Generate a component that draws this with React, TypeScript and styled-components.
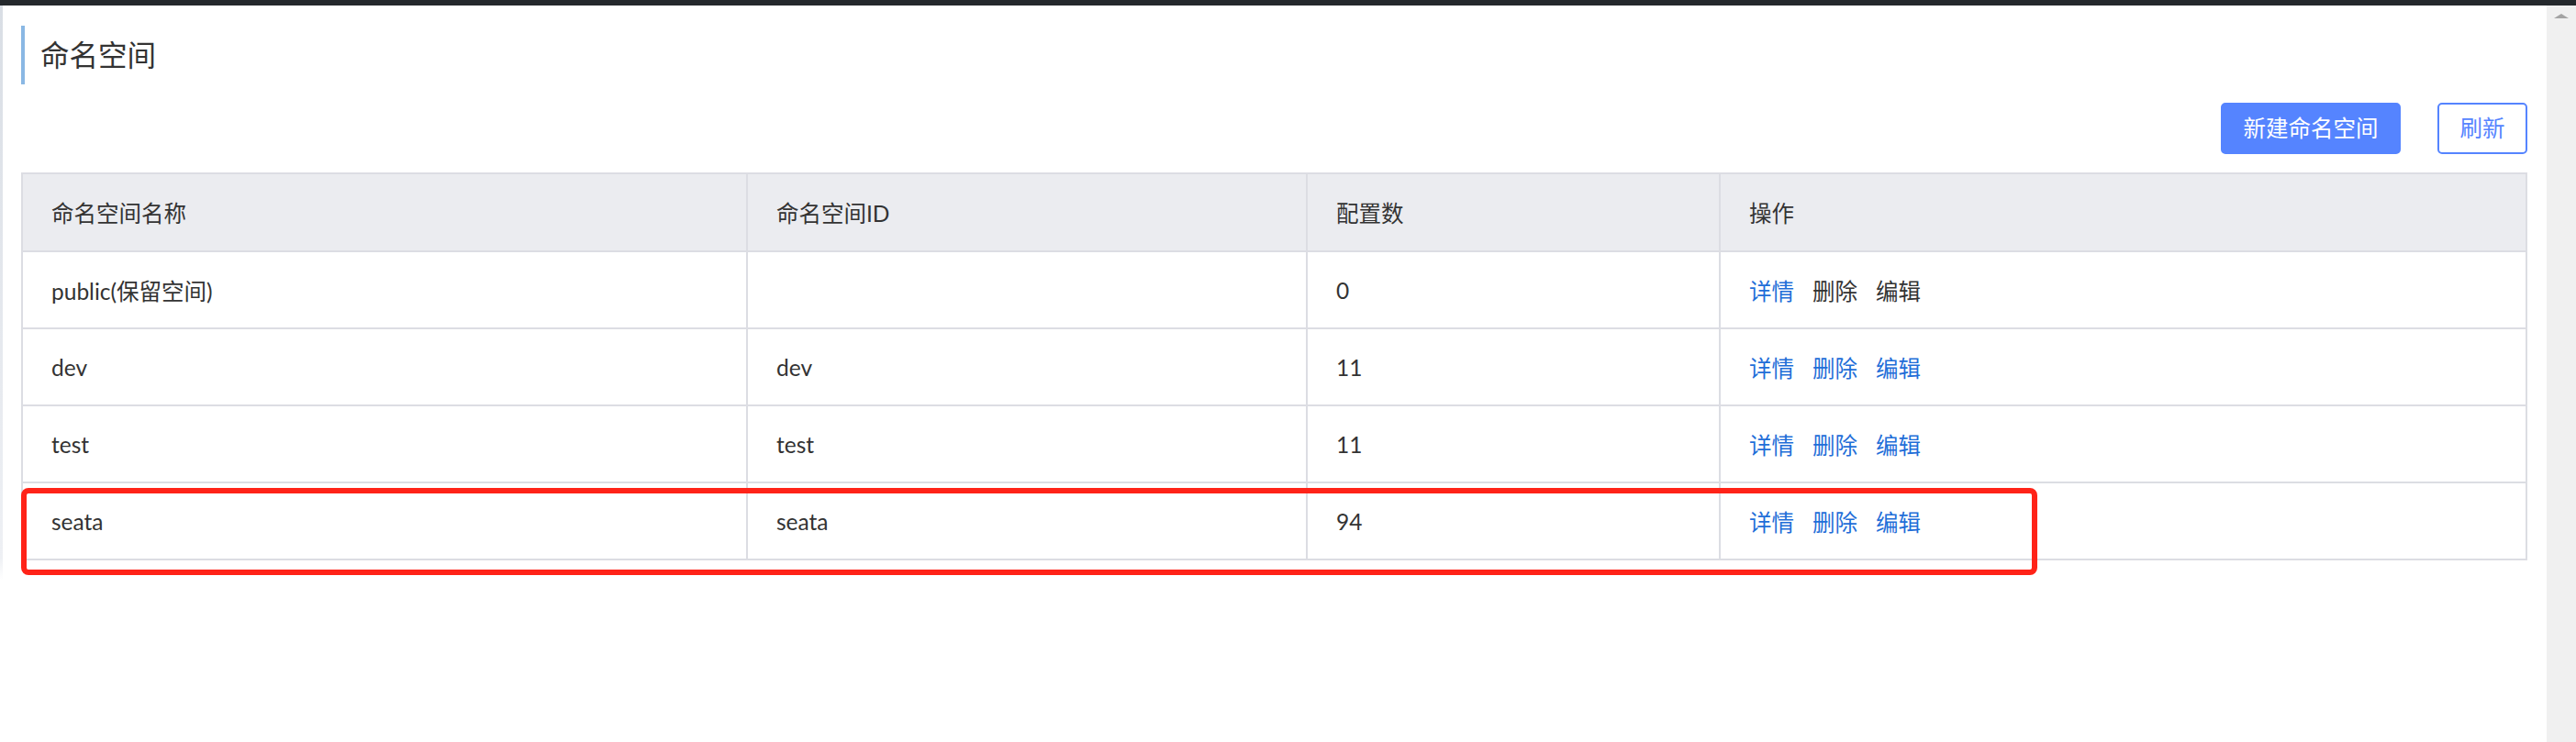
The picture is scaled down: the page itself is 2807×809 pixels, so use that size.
import React from "react";
import styled, { createGlobalStyle } from "styled-components";

const GlobalStyle = createGlobalStyle`
  html, body {
    margin: 0;
    padding: 0;
    background: #ffffff;
  }
  body {
    font-family: Lato, "Noto Sans CJK SC", sans-serif;
    color: #333333;
  }
  * { box-sizing: border-box; }
`;

const Page = styled.div`
  width: 2807px;
  height: 809px;
  display: flex;
  flex-direction: column;
  overflow: hidden;
`;

const TopBar = styled.div`
  height: 6px;
  flex: none;
  background: #24282c;
`;

const Body = styled.div`
  flex: 1;
  display: flex;
`;

const LeftStrip = styled.div`
  width: 3px;
  flex: none;
  background: linear-gradient(#d9dee5, #eef0f4 75%, #ffffff 78%);
`;

const Content = styled.main`
  flex: 1;
  padding: 22px 21px 0 20px;
  display: flex;
  flex-direction: column;
`;

const Scrollbar = styled.div`
  width: 32px;
  flex: none;
  background: #f0f0f0;
  display: flex;
  justify-content: center;
  padding-top: 9px;
`;

const ScrollArrow = styled.div`
  width: 0;
  height: 0;
  border-left: 8px solid transparent;
  border-right: 8px solid transparent;
  border-bottom: 5px solid #a3a3a3;
`;

const Title = styled.h1`
  margin: 0;
  height: 64px;
  border-left: 4px solid #8ab8e4;
  padding-left: 17px;
  font-size: 31.5px;
  font-weight: 400;
  line-height: 64px;
  color: #333333;
  font-family: Lato, "Noto Sans CJK SC", sans-serif;
`;

const Toolbar = styled.div`
  margin-top: 20px;
  display: flex;
  justify-content: flex-end;
  gap: 40px;
`;

const Button = styled.button<{ $primary?: boolean }>`
  height: 56px;
  padding: 0 22.5px;
  border: 2px solid #5584ff;
  border-radius: 5px;
  background: ${(p) => (p.$primary ? "#5584ff" : "#ffffff")};
  color: ${(p) => (p.$primary ? "#ffffff" : "#5584ff")};
  font-family: Lato, "Noto Sans CJK SC", sans-serif;
  font-size: 24.5px;
  line-height: 52px;
  cursor: pointer;
`;

const TableWrap = styled.div`
  position: relative;
  margin-top: 20px;
`;

const Table = styled.table`
  width: 100%;
  border-collapse: separate;
  border-spacing: 0;
  table-layout: fixed;
  border-top: 2px solid #dcdde3;
  border-left: 2px solid #dcdde3;
`;

const HeadCell = styled.th`
  height: 85px;
  padding: 0 0 0 31px;
  background: #ebecf0;
  border-right: 2px solid #dcdde3;
  border-bottom: 2px solid #dcdde3;
  text-align: left;
  font-weight: 400;
  font-size: 24.5px;
  color: #333333;
`;

const Cell = styled.td`
  height: 84px;
  padding: 0 0 0 31px;
  border-right: 2px solid #dcdde3;
  border-bottom: 2px solid #dcdde3;
  font-size: 24.5px;
  color: #333333;
  vertical-align: middle;
`;

const Actions = styled.div`
  display: flex;
  gap: 20px;
`;

const ActionLink = styled.a<{ $disabled?: boolean }>`
  color: ${(p) => (p.$disabled ? "#333333" : "#1f6ed8")};
  text-decoration: none;
  cursor: pointer;
`;

const Highlight = styled.div`
  position: absolute;
  left: 0;
  top: 344px;
  width: 2197px;
  height: 95px;
  border: 6px solid #ff2318;
  border-radius: 8px;
  pointer-events: none;
`;

type Row = { name: string; id: string; count: string; reserved?: boolean };

const rows: Row[] = [
  { name: "public(保留空间)", id: "", count: "0", reserved: true },
  { name: "dev", id: "dev", count: "11" },
  { name: "test", id: "test", count: "11" },
  { name: "seata", id: "seata", count: "94" },
];

export default function App() {
  return (
    <Page>
      <GlobalStyle />
      <TopBar />
      <Body>
        <LeftStrip />
        <Content>
          <Title>命名空间</Title>
          <Toolbar>
            <Button $primary>新建命名空间</Button>
            <Button>刷新</Button>
          </Toolbar>
          <TableWrap>
            <Table>
              <colgroup>
                <col style={{ width: 790 }} />
                <col style={{ width: 610 }} />
                <col style={{ width: 450 }} />
                <col />
              </colgroup>
              <thead>
                <tr>
                  <HeadCell>命名空间名称</HeadCell>
                  <HeadCell>命名空间ID</HeadCell>
                  <HeadCell>配置数</HeadCell>
                  <HeadCell>操作</HeadCell>
                </tr>
              </thead>
              <tbody>
                {rows.map((r) => (
                  <tr key={r.name}>
                    <Cell>{r.name}</Cell>
                    <Cell>{r.id}</Cell>
                    <Cell>{r.count}</Cell>
                    <Cell>
                      <Actions>
                        <ActionLink>详情</ActionLink>
                        <ActionLink $disabled={r.reserved}>删除</ActionLink>
                        <ActionLink $disabled={r.reserved}>编辑</ActionLink>
                      </Actions>
                    </Cell>
                  </tr>
                ))}
              </tbody>
            </Table>
            <Highlight />
          </TableWrap>
        </Content>
        <Scrollbar>
          <ScrollArrow />
        </Scrollbar>
      </Body>
    </Page>
  );
}
